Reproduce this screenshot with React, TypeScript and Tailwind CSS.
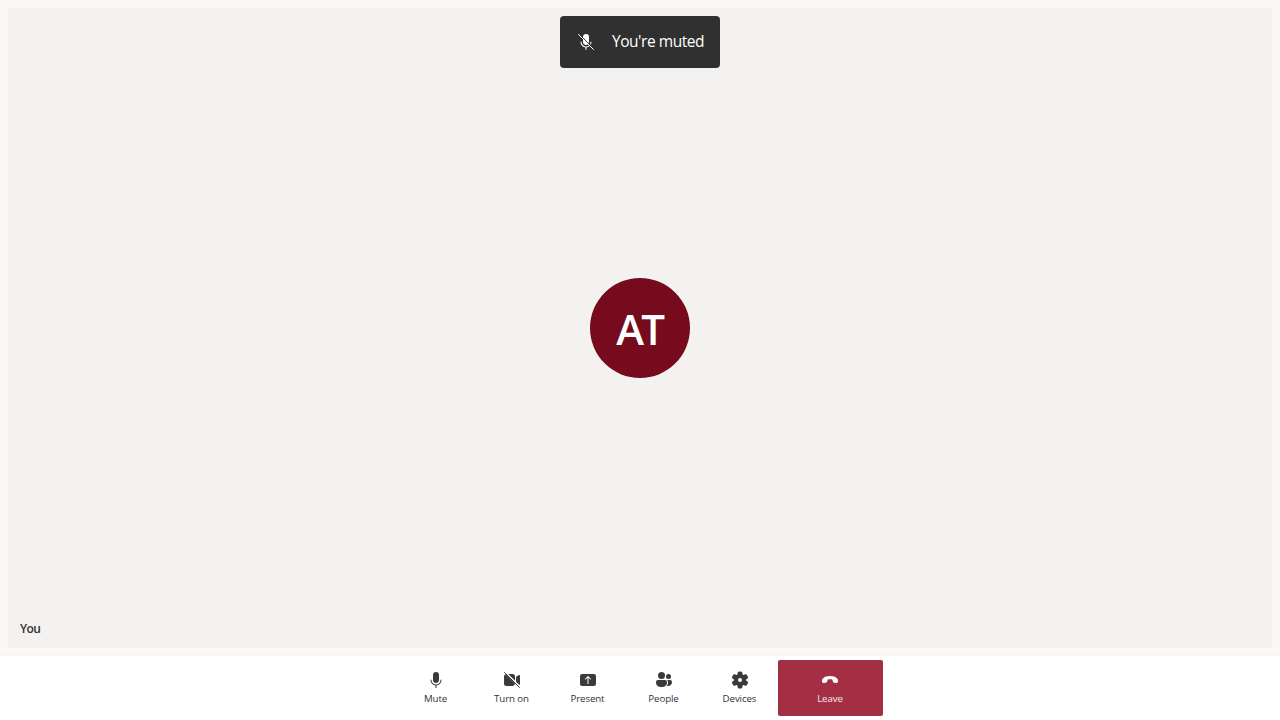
import type { ReactNode } from 'react';

function Icon({ children }: { children: ReactNode }) {
  return (
    <svg viewBox="0 0 20 20" className="block h-5 w-5 shrink-0" fill="currentColor">
      {children}
    </svg>
  );
}

function MicIcon() {
  return (
    <Icon>
      <path d="M10 13c1.66 0 3-1.34 3-3V5a3 3 0 0 0-6 0v5a3 3 0 0 0 3 3Z" />
      <path d="M5 9.5c.28 0 .5.22.5.5a4.5 4.5 0 1 0 9 0 .5.5 0 0 1 1 0 5.5 5.5 0 0 1-5 5.48v2.02a.5.5 0 0 1-1 0v-2.02A5.5 5.5 0 0 1 4.5 10c0-.28.22-.5.5-.5Z" />
    </Icon>
  );
}

function MicOffIcon() {
  return (
    <Icon>
      <path d="M7 5.6V5a3 3 0 0 1 6 0v5c0 .5-.1.95-.3 1.35L7 5.6Z" />
      <path d="M7 7.1 12 12.2A3 3 0 0 1 7 10V7.1Z" />
      <path d="M5 9.5c.28 0 .5.22.5.5a4.5 4.5 0 0 0 7.3 3.52l.71.71a5.5 5.5 0 0 1-3.01 1.25v2.02a.5.5 0 0 1-1 0v-2.02A5.5 5.5 0 0 1 4.5 10c0-.28.22-.5.5-.5ZM14.1 11.9a4.5 4.5 0 0 0 .4-1.9.5.5 0 0 1 1 0c0 .95-.24 1.85-.66 2.64l-.74-.74Z" />
      <path d="M2.5 2.5 17.5 17.5" stroke="currentColor" strokeWidth="1" strokeLinecap="round" />
    </Icon>
  );
}

function VideoOffIcon() {
  return (
    <Icon>
      <path d="M2 6.5c0-1.1.6-2 1.6-2.35L13 13.55A2.5 2.5 0 0 1 10.5 16h-6A2.5 2.5 0 0 1 2 13.5v-7Z" />
      <path d="M6.2 4h4.3A2.5 2.5 0 0 1 13 6.5v4.3L6.2 4ZM14 6.93l2.76-1.84c.53-.35 1.24.03 1.24.66v8.5c0 .3-.16.54-.4.68L14 11.8V6.93Z" />
      <path d="M2.5 2.5 17.5 17.5" stroke="currentColor" strokeWidth="1" strokeLinecap="round" />
    </Icon>
  );
}

function PresentIcon() {
  return (
    <Icon>
      <path
        fillRule="evenodd"
        d="M4 4a2 2 0 0 0-2 2v8c0 1.1.9 2 2 2h12a2 2 0 0 0 2-2V6a2 2 0 0 0-2-2H4Zm6.35 2.15 2.5 2.5a.5.5 0 0 1-.7.7L10.5 7.71v5.79a.5.5 0 0 1-1 0V7.7L7.85 9.36a.5.5 0 1 1-.7-.7l2.5-2.5c.2-.2.5-.2.7 0Z"
      />
    </Icon>
  );
}

function PeopleIcon() {
  return (
    <Icon>
      <circle cx="7.5" cy="5.5" r="3.5" />
      <circle cx="14.5" cy="6.5" r="2.5" />
      <path d="M4 10h7a2 2 0 0 1 2 2v.4c0 2.8-2.4 4.6-5.5 4.6S2 15.2 2 12.4V12c0-1.1.9-2 2-2Z" />
      <path d="M13.2 10H16a2 2 0 0 1 2 2c0 2.6-1.7 4-4 4-.5 0-1-.07-1.4-.2.9-.9 1.4-2 1.4-3.4V12c0-.75-.3-1.46-.8-2Z" />
    </Icon>
  );
}

function SettingsIcon() {
  return (
    <Icon>
      <path d="M1.91 7.38A8.5 8.5 0 0 1 3.7 4.3a.5.5 0 0 1 .54-.13l1.92.68a1 1 0 0 0 1.32-.76l.36-2a.5.5 0 0 1 .4-.4 8.53 8.53 0 0 1 3.55 0c.2.04.35.2.38.4l.37 2a1 1 0 0 0 1.32.76l1.92-.68a.5.5 0 0 1 .54.13 8.5 8.5 0 0 1 1.78 3.08c.06.2 0 .4-.15.54l-1.56 1.32a1 1 0 0 0 0 1.52l1.56 1.32a.5.5 0 0 1 .15.54 8.5 8.5 0 0 1-1.78 3.08.5.5 0 0 1-.54.13l-1.92-.68a1 1 0 0 0-1.32.76l-.37 2a.5.5 0 0 1-.38.4 8.53 8.53 0 0 1-3.56 0 .5.5 0 0 1-.39-.4l-.36-2a1 1 0 0 0-1.32-.76l-1.92.68a.5.5 0 0 1-.54-.13 8.5 8.5 0 0 1-1.79-3.08.5.5 0 0 1 .16-.54l1.56-1.32a1 1 0 0 0 0-1.52L2.07 7.92a.5.5 0 0 1-.16-.54ZM8 10a2 2 0 1 0 4 0 2 2 0 0 0-4 0Z" />
    </Icon>
  );
}

function HangUpIcon() {
  return (
    <Icon>
      <path d="M18 10.8l-.15.9c-.15.85-.97 1.4-1.85 1.27l-1.75-.3c-.76-.13-1.32-.68-1.5-1.4l-.45-1.65C11.5 9.3 10.8 9.15 10 9.15s-1.5.15-2.3.47l-.45 1.65c-.18.72-.74 1.27-1.5 1.4l-1.75.3c-.88.13-1.7-.42-1.85-1.27L2 10.8c-.13-.98.2-1.75.95-2.4C4.6 6.8 6.95 6 10 6s5.4.8 7.05 2.4c.75.65 1.08 1.42.95 2.4Z" />
    </Icon>
  );
}

function ControlButton({ label, icon }: { label: string; icon: ReactNode }) {
  return (
    <button className="flex h-14 w-[76px] flex-col items-center pt-2.5 text-[#3b3a39]">
      {icon}
      <span className="mt-px mr-px text-[9.7px] leading-4 tracking-[-0.1px] text-[#323130]">{label}</span>
    </button>
  );
}

export default function App() {
  return (
    <div className="flex h-[720px] w-[1280px] flex-col overflow-hidden bg-[#faf9f8] font-['Open_Sans','Noto_Sans',sans-serif]">
      <main className="flex min-h-0 flex-1 p-2">
        <section className="grid flex-1 grid-cols-1 grid-rows-1 rounded bg-[#f3f2f1]">
          <div className="col-start-1 row-start-1 flex items-center justify-center">
            <div className="flex h-[100px] w-[100px] items-center justify-center rounded-full bg-[#750b1c] pt-[2px] text-[42px] leading-none font-semibold tracking-[-2.8px] text-white">
              <span className="mr-[1.6px]">AT</span>
            </div>
          </div>
          <div className="col-start-1 row-start-1 mt-2 flex h-[52px] w-40 items-center justify-self-center rounded bg-[#303030] pl-4 text-white">
            <MicOffIcon />
            <span className="mb-[2px] ml-4 text-[15.5px] leading-5 tracking-[-0.46px] whitespace-nowrap">You're muted</span>
          </div>
          <span className="col-start-1 row-start-1 mb-[11px] ml-3 self-end justify-self-start text-[12px] leading-4 font-semibold tracking-[-0.6px] text-[#323130]">
            You
          </span>
        </section>
      </main>
      <footer className="flex h-16 shrink-0 items-start bg-white pt-1 pl-[398px] shadow-[0_0_5px_rgba(0,0,0,0.05)]">
        <ControlButton label="Mute" icon={<MicIcon />} />
        <ControlButton label="Turn on" icon={<VideoOffIcon />} />
        <ControlButton label="Present" icon={<PresentIcon />} />
        <ControlButton label="People" icon={<PeopleIcon />} />
        <ControlButton label="Devices" icon={<SettingsIcon />} />
        <button className="flex h-14 w-[105px] flex-col items-center rounded-[2px] bg-[#a42e43] pt-2.5 pr-px text-white">
          <HangUpIcon />
          <span className="mt-px text-[9.7px] leading-4 tracking-[-0.1px] text-white/90">Leave</span>
        </button>
      </footer>
    </div>
  );
}
